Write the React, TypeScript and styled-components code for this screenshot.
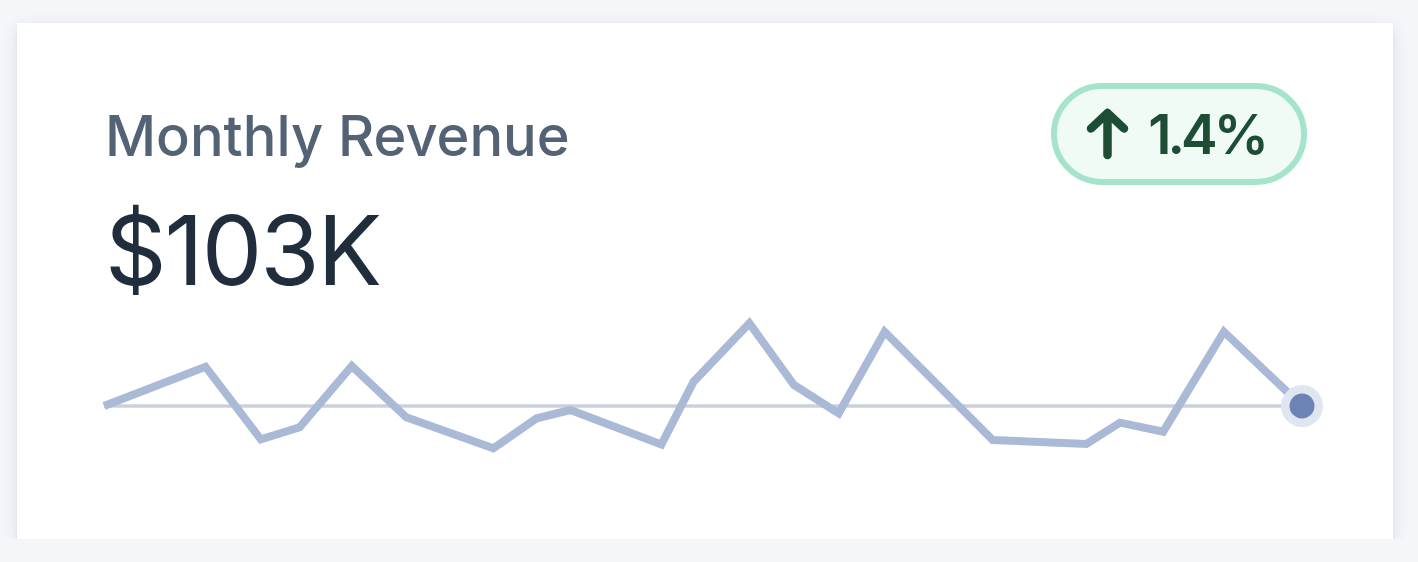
import styled, { createGlobalStyle } from "styled-components";

const GlobalStyle = createGlobalStyle`
  body {
    margin: 0;
    background: #f4f6fa;
    font-family: Inter, "Open Sans", sans-serif;
  }
`;

// sparkline samples, in chart pixels (x from the left of the content, y from the chart top)
const points: [number, number][] = [
  [-1, 96],
  [100.5, 56.7],
  [155.8, 129.3],
  [194.6, 117.3],
  [246.8, 56],
  [301.3, 107.3],
  [388.3, 138.3],
  [431.8, 108.3],
  [465.4, 100],
  [556.4, 134.5],
  [588.6, 71.7],
  [644.4, 13.3],
  [689, 75],
  [733.7, 103.3],
  [779.6, 21.7],
  [887.7, 130],
  [981.4, 134],
  [1015, 112.7],
  [1058.2, 121.7],
  [1118.9, 21.7],
  [1197, 96],
];

function StatCard() {
  const first = points[0];
  const last = points[points.length - 1];
  return (
    <Card>
      <Header>
        <Title>Monthly Revenue</Title>
        <Badge>
          <svg width="43" height="52" viewBox="0 0 43 52">
            <path
              d="M21.5 5 L21.5 47 M5 20.5 L21.5 5 L38 20.5"
              fill="none"
              stroke="currentColor"
              strokeWidth="8.5"
              strokeLinecap="round"
              strokeLinejoin="round"
            />
          </svg>
          <span>1.4%</span>
        </Badge>
      </Header>
      <Value>$103K</Value>
      <Chart width="1202" height="160" viewBox="0 0 1202 160">
        <line
          x1={first[0]}
          y1={first[1]}
          x2={last[0]}
          y2={last[1]}
          stroke="#cad0dc"
          strokeWidth="3.5"
        />
        <polyline
          points={points.map((p) => p.join(",")).join(" ")}
          fill="none"
          stroke="#aab9d6"
          strokeWidth="8"
          strokeLinejoin="miter"
        />
        <circle cx={last[0]} cy={last[1]} r="21" fill="#dfe6f2" />
        <circle cx={last[0]} cy={last[1]} r="12.5" fill="#6b84b5" />
      </Chart>
    </Card>
  );
}

export default function App() {
  return (
    <>
      <GlobalStyle />
      <Page>
        <StatCard />
      </Page>
    </>
  );
}

const Page = styled.div`
  padding: 23px 0 0 17px;
`;

const Card = styled.div`
  width: 1376px;
  height: 516px;
  box-sizing: border-box;
  padding: 60px 86px 0 88px;
  background: #ffffff;
  box-shadow: 0 5px 16px rgba(40, 52, 90, 0.12), 0 1px 3px rgba(40, 52, 90, 0.06);
`;

const Header = styled.div`
  display: flex;
  justify-content: space-between;
  align-items: center;
  height: 102px;
`;

const Title = styled.h2`
  margin: 0;
  padding-top: 3px;
  font-size: 56px;
  line-height: 1;
  font-weight: 500;
  color: #536275;
`;

const Badge = styled.div`
  display: flex;
  align-items: center;
  gap: 19px;
  height: 102px;
  box-sizing: border-box;
  padding: 0 36px 0 29px;
  border: 6px solid #a5e4ca;
  border-radius: 51px;
  background: #f0fbf6;
  color: #1e4d36;
  font-size: 55px;
  font-weight: 600;
  letter-spacing: -4px;
  line-height: 1;
`;

const Value = styled.div`
  margin-top: 17px;
  font-size: 96px;
  line-height: 1;
  font-weight: 400;
  letter-spacing: -2px;
  color: #1f2d3d;
`;

const Chart = styled.svg`
  display: block;
  margin-top: 12px;
  overflow: visible;
`;
